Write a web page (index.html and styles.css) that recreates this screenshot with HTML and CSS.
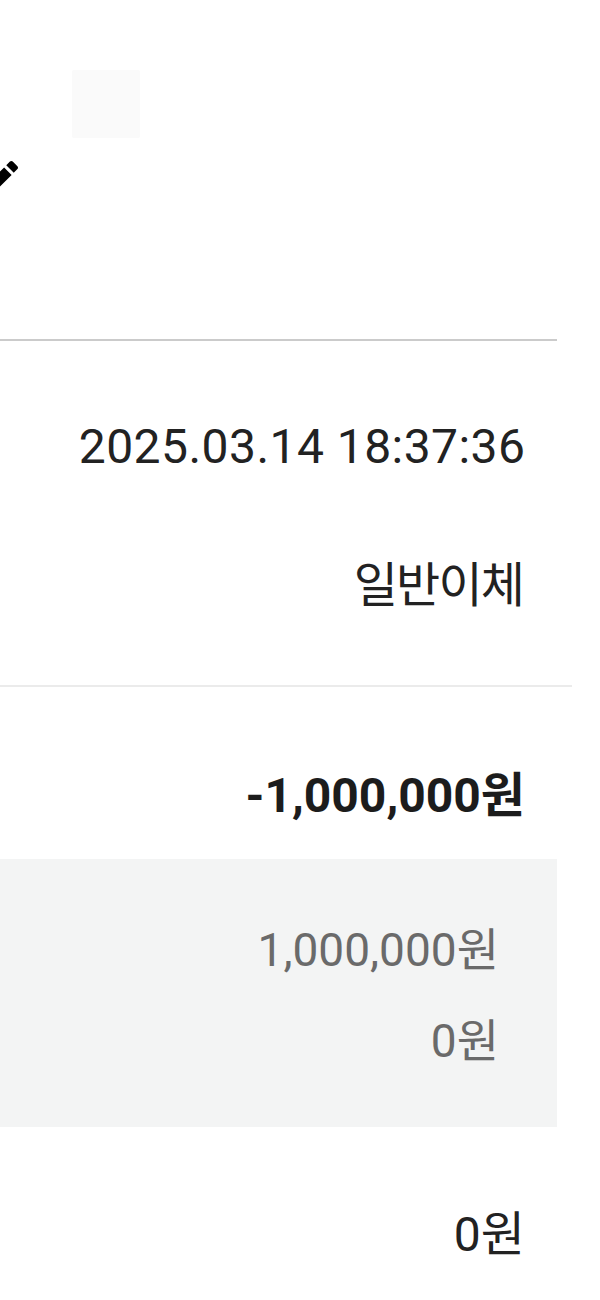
FILE: index.html
```html
<!DOCTYPE html>
<html lang="ko">
<head>
<meta charset="utf-8">
<title>거래 상세</title>
<link rel="stylesheet" href="styles.css">
</head>
<body>
<div class="page">
  <header class="header">
    <div class="thumb"></div>
    <svg class="edit-icon" viewBox="0 0 24 24" width="48" height="48" aria-hidden="true">
      <path d="M3 17.25V21h3.75L17.81 9.94l-3.75-3.75L3 17.25zM20.71 7.04c.39-.39.39-1.02 0-1.41l-2.34-2.34c-.39-.39-1.02-.39-1.41 0l-1.83 1.83 3.75 3.75 1.83-1.83z" fill="#000"/>
    </svg>
  </header>
  <div class="divider divider-strong"></div>

  <section class="section section-info">
    <div class="row"><span class="label">거래일시</span><span class="value value-date">2025.03.14 18:37:36</span></div>
    <div class="row row-type"><span class="label">거래구분</span><span class="value value-hangul">일반이체</span></div>
  </section>
  <div class="divider divider-light"></div>

  <section class="section section-amount">
    <div class="row"><span class="label">거래금액</span><span class="value value-bold">-1,000,000원</span></div>
    <div class="detail-box">
      <div class="detail-row"><span class="label">이체금액</span><span class="value value-sub">1,000,000원</span></div>
      <div class="detail-row detail-row-second"><span class="label">수수료</span><span class="value value-sub">0원</span></div>
    </div>
    <div class="row row-balance"><span class="label">잔액</span><span class="value">0원</span></div>
  </section>
</div>
</body>
</html>
```

FILE: styles.css
```css
html, body {
  margin: 0;
  padding: 0;
  background: #ffffff;
}

body {
  width: 600px;
  font-family: Roboto, "Noto Sans CJK KR", sans-serif;
  color: #222222;
  overflow: hidden;
}

.page {
  width: 600px;
}

.header {
  height: 339px;
  padding-top: 70px;
  box-sizing: border-box;
  display: flex;
  flex-direction: column;
}

.thumb {
  width: 68px;
  height: 68px;
  margin-left: 72px;
  background: #fafafa;
  border-radius: 2px;
}

.edit-icon {
  display: block;
  margin-left: -24px;
  margin-top: 17px;
}

.divider {
  height: 2px;
}

.divider-strong {
  width: 557px;
  background: #cbcbcb;
}

.divider-light {
  width: 572px;
  background: #ebebeb;
}

.section-info {
  padding-top: 78px;
  padding-bottom: 71px;
}

.section-amount {
  padding-top: 81px;
}

.row {
  display: flex;
  justify-content: flex-end;
  padding-right: 75px;
  font-size: 48px;
  line-height: 56px;
  height: 56px;
}

.row-type {
  margin-top: 83px;
}

.label {
  display: none;
}

.value {
  white-space: nowrap;
}

.value-date {
  letter-spacing: 0.45px;
  margin-right: -0.45px;
}

.value-hangul {
  letter-spacing: -1.8px;
  margin-right: 1.8px;
}

.value-bold {
  font-weight: 700;
  color: #1c1c1c;
}

.detail-box {
  width: 557px;
  margin-top: 35px;
  height: 268px;
  box-sizing: border-box;
  padding-top: 64px;
  background: #f3f4f4;
}

.detail-row {
  display: flex;
  justify-content: flex-end;
  padding-right: 58px;
  font-size: 46px;
  line-height: 54px;
  height: 54px;
}

.detail-row-second {
  margin-top: 37px;
}

.value-sub {
  color: #6a6a6a;
}

.row-balance {
  margin-top: 80px;
}
```
